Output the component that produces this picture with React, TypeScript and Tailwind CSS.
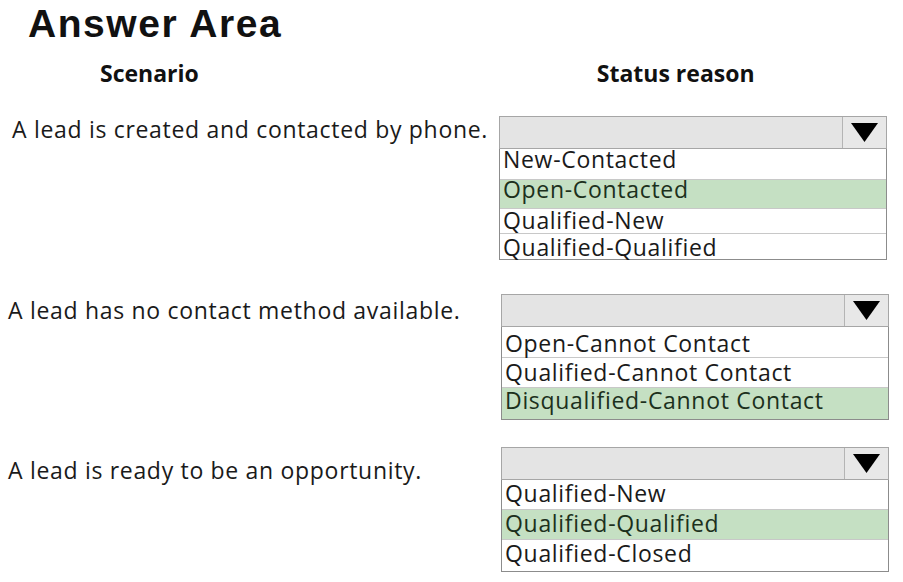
type Option = { label: string; h: string; pt: string; picked?: boolean };

const rows: {
  scenario: string;
  rowClass: string;
  textClass: string;
  leftClass: string;
  options: Option[];
}[] = [
  {
    scenario: "A lead is created and contacted by phone.",
    rowClass: "mt-[29px]",
    leftClass: "w-[499px]",
    textClass: "pl-[12px] pt-[1px]",
    options: [
      { label: "New-Contacted", h: "h-[30px]", pt: "pt-[1px]" },
      { label: "Open-Contacted", h: "h-[29px]", pt: "pt-[0px]", picked: true },
      { label: "Qualified-New", h: "h-[25px]", pt: "pt-[2px]" },
      { label: "Qualified-Qualified", h: "h-[26px]", pt: "pt-[4px]" },
    ],
  },
  {
    scenario: "A lead has no contact method available.",
    rowClass: "mt-[34px]",
    leftClass: "w-[501px]",
    textClass: "pl-[8px] pt-[4px]",
    options: [
      { label: "Open-Cannot Contact", h: "h-[30px]", pt: "pt-[7px]" },
      { label: "Qualified-Cannot Contact", h: "h-[30px]", pt: "pt-[5px]" },
      { label: "Disqualified-Cannot Contact", h: "h-[32px]", pt: "pt-[3px]", picked: true },
    ],
  },
  {
    scenario: "A lead is ready to be an opportunity.",
    rowClass: "mt-[27px]",
    leftClass: "w-[501px]",
    textClass: "pl-[8px] pt-[11px]",
    options: [
      { label: "Qualified-New", h: "h-[29px]", pt: "pt-[4px]" },
      { label: "Qualified-Qualified", h: "h-[30px]", pt: "pt-[4px]", picked: true },
      { label: "Qualified-Closed", h: "h-[32px]", pt: "pt-[4px]" },
    ],
  },
];

function Dropdown({ options }: { options: Option[] }) {
  return (
    <div className="w-[388px]">
      <div className="flex h-[33px] border border-[#a6a6a6] bg-[#e4e4e4]">
        <div className="flex-1" />
        <div className="flex w-[44px] items-center justify-center border-l border-[#b4b4b4] bg-[#e8e8e8]">
          <svg width="27" height="19" viewBox="0 0 27 19">
            <polygon points="0,0 27,0 13.5,19" fill="#000" />
          </svg>
        </div>
      </div>
      <div className="border-x border-b border-[#8c8c8c]">
        {options.map((o, i) => (
          <div
            key={o.label}
            className={`flex items-start px-[3px] ${o.h} ${o.pt} ${
              i > 0 ? "border-t border-[#c8c8c8]" : ""
            } ${o.picked ? "bg-[#c5e0c3] text-[#1c301c]" : "bg-white text-[#1a1a1a]"}`}
          >
            <span className="text-[23px] leading-[18px] tracking-[0.03em] whitespace-nowrap">
              {o.label}
            </span>
          </div>
        ))}
      </div>
    </div>
  );
}

export default function App() {
  return (
    <div className="h-[582px] w-[903px] overflow-hidden bg-white font-['Open_Sans',sans-serif]">
      <h1 className="pl-[28px] pt-[4px] font-['Liberation_Sans',Arial,sans-serif] text-[39px] font-bold leading-[40px] tracking-[0.04em] text-[#111]">
        Answer Area
      </h1>
      <div className="mt-[15px] flex text-[23px] font-bold leading-[28px] text-[#111]">
        <span className="ml-[100px]">Scenario</span>
        <span className="ml-[398px]">Status reason</span>
      </div>
      {rows.map((r) => (
        <div key={r.scenario} className={`flex items-start ${r.rowClass}`}>
          <div className={`shrink-0 ${r.leftClass}`}>
            <p
              className={`text-[23px] leading-[24px] tracking-[0.03em] whitespace-nowrap text-[#1a1a1a] ${r.textClass}`}
            >
              {r.scenario}
            </p>
          </div>
          <Dropdown options={r.options} />
        </div>
      ))}
    </div>
  );
}
